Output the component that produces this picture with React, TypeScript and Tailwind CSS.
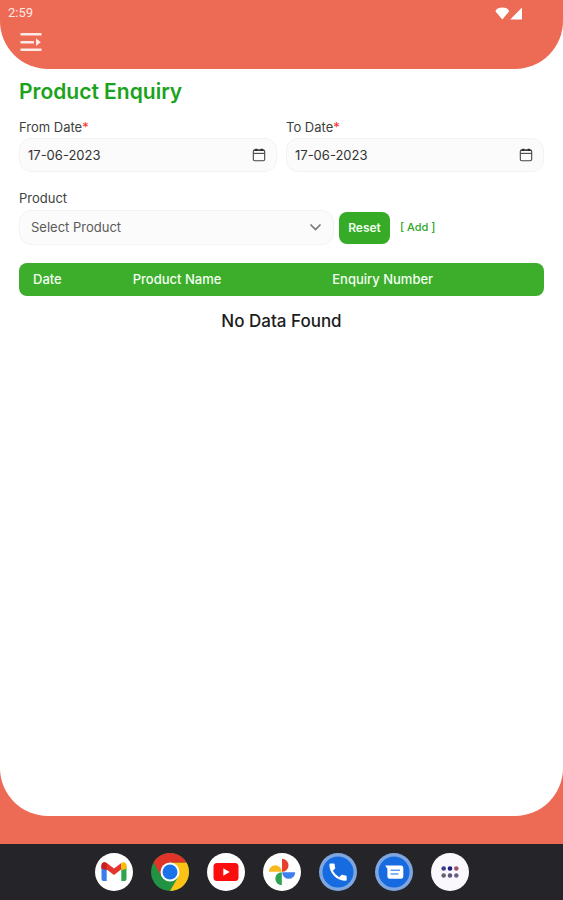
import { useState } from "react"
import type { ReactNode } from "react"

const columns = [
  { label: "Date", width: "w-[19%]" },
  { label: "Product Name", width: "w-[38%]" },
  { label: "Enquiry Number", width: "w-[43%]" },
]

function DateField({ id, label }: { id: string; label: string }) {
  const [value, setValue] = useState("17-06-2023")

  return (
    <div className="min-w-0 flex-1">
      <label htmlFor={id} className="block text-[13px] leading-4 text-[#3b4240]">
        {label}
        <span className="text-[#ff2a1a]">*</span>
      </label>
      <div className="mt-[3px] flex h-[34px] items-center rounded-xl border border-[#f3f3f3] bg-[#fbfbfb] pr-2.5 pl-2">
        <input
          id={id}
          type="text"
          value={value}
          onChange={(e) => setValue(e.target.value)}
          className="min-w-0 flex-1 bg-transparent text-[13px] leading-4 text-[#333] outline-none"
        />
        <button type="button" aria-label={`Pick ${label}`}>
          <svg width="14" height="14" viewBox="0 0 14 14" fill="none" stroke="#444" strokeWidth="1.1">
            <rect x="1.3" y="2" width="11.4" height="10.8" rx="1.5" />
            <path d="M1.3 5.4h11.4" />
            <path d="M1.8 2.200h10.400" stroke="#333" strokeWidth="1.300" />
            <path d="M3.300 1.700h2M8.700 1.700h2" stroke="#222" strokeWidth="2" />
          </svg>
        </button>
      </div>
    </div>
  )
}

function DockIcon({ label, children }: { label: string; children: ReactNode }) {
  return (
    <button type="button" aria-label={label} className="size-[38px] shrink-0">
      <svg viewBox="0 0 38 38" className="size-full">
        {children}
      </svg>
    </button>
  )
}

function StatusBar() {
  return (
    <div className="flex h-[26px] items-center justify-between pr-10 pl-2 font-['Roboto',sans-serif] text-[13px] leading-4 text-[#ffe9e4]">
      <span>2:59</span>
      <svg width="28" height="13" viewBox="0 0 28 13" fill="#fff">
        <path d="M0.4 4.2C1.5 1.4 4 0.4 7.3 0.4s5.8 1 6.9 3.8L7.3 12.4z" />
        <path d="M27 0.6v11.8H15.2z" />
      </svg>
    </div>
  )
}

function Dock() {
  return (
    <nav aria-label="Apps" className="flex h-14 items-center justify-center gap-[18px] bg-[#242429]">
      <DockIcon label="Gmail">
        <circle cx="19" cy="19" r="19" fill="#fff" />
        <path d="M6.5 13v13a2 2 0 0 0 2 2h3.200V15z" fill="#3b7ded" />
        <path d="M31.500 13v13a2 2 0 0 1-2 2h-3.200V15z" fill="#2fa54e" />
        <path d="M6.500 15.500v-3.200c0-3 3.200-4 5.300-2.400L19 15.400l7.300-5.500v6.400L19 21.900l-7.300-5.500z" fill="#e3352b" />
        <path d="M6.500 15.600v-3.300c0-2 1.600-3.200 3.200-3l2 1.200v6.800l-5.200-1.700z" fill="#c5221f" />
        <path d="M26.300 9.900c2.100-1.600 5.200-.6 5.200 2.400v3.500l-5.200 1.500z" fill="#fbbc04" />
      </DockIcon>
      <DockIcon label="Chrome">
        <circle cx="19" cy="19" r="19" fill="#229342" />
        <path d="M35.450 9.500H19V19l8.230 4.750L19 38A19 19 0 0 0 35.450 9.500z" fill="#fcc315" />
        <path d="M2.550 9.500 10.770 23.750 19 19V9.500h16.450A19 19 0 0 0 2.550 9.500z" fill="#df3427" />
        <circle cx="19" cy="19" r="9.500" fill="#fff" />
        <circle cx="19" cy="19" r="7.500" fill="#1a73e8" />
      </DockIcon>
      <DockIcon label="YouTube">
        <circle cx="19" cy="19" r="19" fill="#fff" />
        <rect x="6.500" y="10" width="25" height="18" rx="3.500" fill="#fb0d0d" />
        <path d="M16.300 15.300v7.400l6.400-3.700z" fill="#fff" />
      </DockIcon>
      <DockIcon label="Photos">
        <circle cx="19" cy="19" r="19" fill="#fff" />
        <path d="M19 5.800a6.500 6.500 0 0 1 0 13z" fill="#e8402f" />
        <path d="M5.800 18.800a6.500 6.500 0 0 1 13 0z" fill="#f9b81b" />
        <path d="M19.200 19.300h13a6.500 6.500 0 0 1-13 0z" fill="#3f7fee" />
        <path d="M18.800 19.200v13a6.500 6.500 0 0 1 0-13z" fill="#2fa350" />
      </DockIcon>
      <DockIcon label="Phone">
        <circle cx="19" cy="19" r="19" fill="#7fa6df" />
        <circle cx="19" cy="19" r="15.500" fill="#176be0" />
        <path
          transform="translate(7.500 7.500) scale(.96)"
          d="M6.620 10.790a15.100 15.100 0 0 0 6.590 6.590l2.200-2.200a1 1 0 0 1 1.020-.24 11.400 11.400 0 0 0 3.570.57 1 1 0 0 1 1 1V20a1 1 0 0 1-1 1A17 17 0 0 1 3 4a1 1 0 0 1 1-1h3.500a1 1 0 0 1 1 1c0 1.250.2 2.450.57 3.570a1 1 0 0 1-.25 1.020z"
          fill="#fff"
        />
      </DockIcon>
      <DockIcon label="Messages">
        <circle cx="19" cy="19" r="19" fill="#7fa6df" />
        <circle cx="19" cy="19" r="15.500" fill="#176be0" />
        <path d="M10.200 12.500H26a2.300 2.300 0 0 1 2.300 2.300v8.700a2.300 2.300 0 0 1-2.300 2.300H14.700a2.300 2.300 0 0 1-2.300-2.300V15.800z" fill="#fff" />
        <path d="M15.500 17.300h9.500M15.500 21h8" stroke="#5f9af0" strokeWidth="1.400" />
      </DockIcon>
      <DockIcon label="All apps">
        <circle cx="19" cy="19" r="19" fill="#faf8fd" />
        <circle cx="12.700" cy="15.500" r="2.300" fill="#3c3c8c" />
        <circle cx="19" cy="15.500" r="2.300" fill="#1c1c86" />
        <circle cx="25.300" cy="15.500" r="2.300" fill="#9b5468" />
        <circle cx="12.700" cy="22.500" r="2.300" fill="#68606f" />
        <circle cx="19" cy="22.500" r="2.300" fill="#5b567c" />
        <circle cx="25.300" cy="22.500" r="2.300" fill="#68608a" />
      </DockIcon>
    </nav>
  )
}

export default function App() {
  const [product, setProduct] = useState("")

  return (
    <div className="flex min-h-screen flex-col bg-[#ed6a55] font-['Inter',sans-serif]">
      <div className="flex flex-1 flex-col rounded-b-[48px] bg-white">
        <header className="h-[69px] rounded-b-[48px] bg-[#ed6a55]">
          <StatusBar />
          <button type="button" aria-label="Open menu" className="mt-1.5 ml-5 block">
            <svg width="22" height="20" viewBox="0 0 22 20" fill="#ffeae5">
              <rect x="0.500" y="1" width="21" height="2.500" />
              <rect x="0.500" y="9" width="13.500" height="2.500" />
              <rect x="0.500" y="16.500" width="21" height="2.500" />
              <path d="M16 6.300 20.800 10.200 16 14.100z" />
            </svg>
          </button>
        </header>

        <main className="flex-1 px-[19px] pt-[10px]">
          <h1 className="text-[21px] leading-[26px] font-semibold text-[#1ba31b]">Product Enquiry</h1>

          <form onSubmit={(e) => e.preventDefault()}>
            <div className="mt-3.5 flex gap-[9px]">
              <DateField id="from-date" label="From Date" />
              <DateField id="to-date" label="To Date" />
            </div>

            <label htmlFor="product" className="mt-[18px] block text-[13px] leading-4 text-[#3b4240]">
              Product
            </label>
            <div className="mt-1 flex items-center">
              <div className="relative w-3/5">
                <select
                  id="product"
                  value={product}
                  onChange={(e) => setProduct(e.target.value)}
                  className="block h-[35px] w-full appearance-none rounded-xl border border-[#f3f3f3] bg-[#fbfbfb] px-[11px] text-[13px] text-[#5a5a5a]"
                >
                  <option value="">Select Product</option>
                </select>
                <svg
                  className="pointer-events-none absolute top-3 right-3"
                  width="13"
                  height="10"
                  viewBox="0 0 13 10"
                  fill="none"
                  stroke="#777"
                  strokeWidth="1.700"
                >
                  <path d="m1.500 2.500 5 5 5-5" />
                </svg>
              </div>
              <button
                type="reset"
                onClick={() => setProduct("")}
                className="ml-[5px] h-8 w-[51px] rounded-lg bg-[#35ab27] text-[12px] font-semibold text-[#f2fff0]"
              >
                Reset
              </button>
              <a href="#add" className="ml-2.5 text-[11px] font-medium text-[#2fa52a]">
                [ Add ]
              </a>
            </div>
          </form>

          <table className="mt-[18px] w-full table-fixed border-separate border-spacing-0">
            <thead>
              <tr>
                {columns.map((col) => (
                  <th
                    key={col.label}
                    className={`${col.width} h-[33px] bg-[#3cae2b] pl-3.5 text-left text-[13px] font-medium text-[#f4fff2] first:rounded-l-lg last:rounded-r-lg`}
                  >
                    {col.label}
                  </th>
                ))}
              </tr>
            </thead>
            <tbody>
              <tr>
                <td colSpan={3} className="pt-[15px] text-center text-[17px] leading-5 font-medium text-[#1c1c1c]">
                  No Data Found
                </td>
              </tr>
            </tbody>
          </table>
        </main>
      </div>
      <div className="h-7" />
      <Dock />
    </div>
  )
}
